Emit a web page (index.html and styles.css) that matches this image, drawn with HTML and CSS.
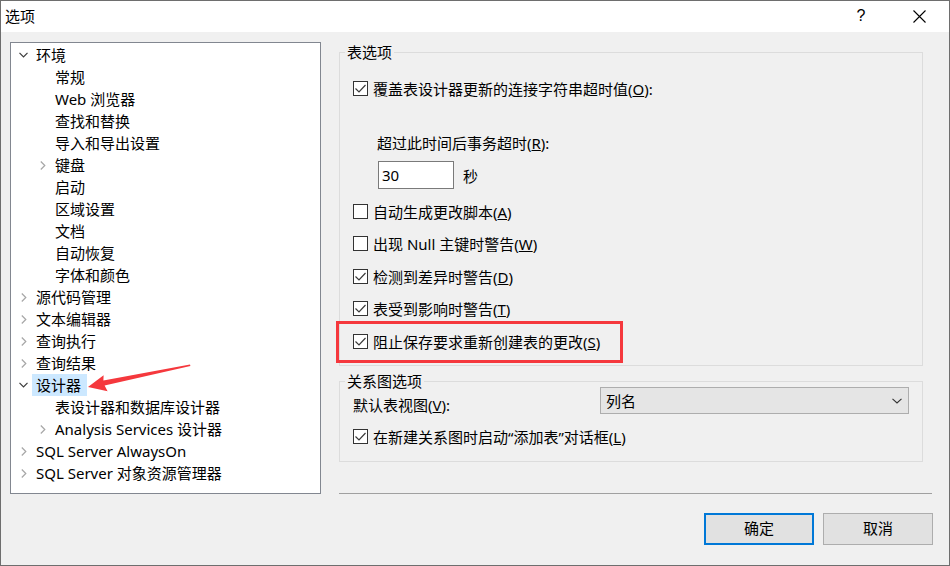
FILE: index.html
```html
<!DOCTYPE html>
<html lang="zh-CN">
<head>
<meta charset="utf-8">
<title>选项</title>
<link rel="stylesheet" href="styles.css">
</head>
<body>
<div class="window">
  <div class="titlebar">
    <span class="title">选项</span>
    <span class="tb-btn help">?</span>
    <span class="tb-btn close"><svg width="13" height="13" viewBox="0 0 13 13"><path d="M0.5 0.5 L12.5 12.5 M12.5 0.5 L0.5 12.5" stroke="#000" stroke-width="1.1" fill="none"/></svg></span>
  </div>
  <div class="content">
    <div class="tree">
      <div class="row l1"><span class="exp"><svg width="9" height="6" viewBox="0 0 9 6"><polyline points="0.5,0.8 4.5,4.8 8.5,0.8" class="chev-open"/></svg></span><span class="lbl">环境</span></div>
      <div class="row l2"><span class="exp"></span><span class="lbl">常规</span></div>
      <div class="row l2"><span class="exp"></span><span class="lbl">Web 浏览器</span></div>
      <div class="row l2"><span class="exp"></span><span class="lbl">查找和替换</span></div>
      <div class="row l2"><span class="exp"></span><span class="lbl">导入和导出设置</span></div>
      <div class="row l2"><span class="exp"><svg width="6" height="9" viewBox="0 0 6 9"><polyline points="0.8,0.5 4.8,4.5 0.8,8.5" class="chev"/></svg></span><span class="lbl">键盘</span></div>
      <div class="row l2"><span class="exp"></span><span class="lbl">启动</span></div>
      <div class="row l2"><span class="exp"></span><span class="lbl">区域设置</span></div>
      <div class="row l2"><span class="exp"></span><span class="lbl">文档</span></div>
      <div class="row l2"><span class="exp"></span><span class="lbl">自动恢复</span></div>
      <div class="row l2"><span class="exp"></span><span class="lbl">字体和颜色</span></div>
      <div class="row l1"><span class="exp"><svg width="6" height="9" viewBox="0 0 6 9"><polyline points="0.8,0.5 4.8,4.5 0.8,8.5" class="chev"/></svg></span><span class="lbl">源代码管理</span></div>
      <div class="row l1"><span class="exp"><svg width="6" height="9" viewBox="0 0 6 9"><polyline points="0.8,0.5 4.8,4.5 0.8,8.5" class="chev"/></svg></span><span class="lbl">文本编辑器</span></div>
      <div class="row l1"><span class="exp"><svg width="6" height="9" viewBox="0 0 6 9"><polyline points="0.8,0.5 4.8,4.5 0.8,8.5" class="chev"/></svg></span><span class="lbl">查询执行</span></div>
      <div class="row l1"><span class="exp"><svg width="6" height="9" viewBox="0 0 6 9"><polyline points="0.8,0.5 4.8,4.5 0.8,8.5" class="chev"/></svg></span><span class="lbl">查询结果</span></div>
      <div class="row l1"><span class="exp"><svg width="9" height="6" viewBox="0 0 9 6"><polyline points="0.5,0.8 4.5,4.8 8.5,0.8" class="chev-open"/></svg></span><span class="lbl selected">设计器</span></div>
      <div class="row l2"><span class="exp"></span><span class="lbl">表设计器和数据库设计器</span></div>
      <div class="row l2"><span class="exp"><svg width="6" height="9" viewBox="0 0 6 9"><polyline points="0.8,0.5 4.8,4.5 0.8,8.5" class="chev"/></svg></span><span class="lbl">Analysis Services 设计器</span></div>
      <div class="row l1"><span class="exp"><svg width="6" height="9" viewBox="0 0 6 9"><polyline points="0.8,0.5 4.8,4.5 0.8,8.5" class="chev"/></svg></span><span class="lbl">SQL Server AlwaysOn</span></div>
      <div class="row l1"><span class="exp"><svg width="6" height="9" viewBox="0 0 6 9"><polyline points="0.8,0.5 4.8,4.5 0.8,8.5" class="chev"/></svg></span><span class="lbl">SQL Server 对象资源管理器</span></div>
    </div>

    <div class="right">
      <fieldset class="group g1">
        <legend>表选项</legend>
        <div class="chk first">
          <svg class="cb" width="15" height="15" viewBox="0 0 15 15"><rect x="0.5" y="0.5" width="14" height="14" class="cb-box"/><polyline points="2.5,7.5 6,11 12.5,4" class="cb-mark"/></svg>
          <span>覆盖表设计器更新的连接字符串超时值(<u>O</u>):</span>
        </div>
        <div class="sublabel">超过此时间后事务超时(<u>R</u>):</div>
        <div class="timeout"><span class="textbox">30</span><span class="unit">秒</span></div>
        <div class="checks">
          <div class="chk tall">
            <svg class="cb" width="15" height="15" viewBox="0 0 15 15"><rect x="0.5" y="0.5" width="14" height="14" class="cb-box"/></svg>
            <span>自动生成更改脚本(<u>A</u>)</span>
          </div>
          <div class="chk tall">
            <svg class="cb" width="15" height="15" viewBox="0 0 15 15"><rect x="0.5" y="0.5" width="14" height="14" class="cb-box"/></svg>
            <span>出现 Null 主键时警告(<u>W</u>)</span>
          </div>
          <div class="chk tall">
            <svg class="cb" width="15" height="15" viewBox="0 0 15 15"><rect x="0.5" y="0.5" width="14" height="14" class="cb-box"/><polyline points="2.5,7.5 6,11 12.5,4" class="cb-mark"/></svg>
            <span>检测到差异时警告(<u>D</u>)</span>
          </div>
          <div class="chk tall">
            <svg class="cb" width="15" height="15" viewBox="0 0 15 15"><rect x="0.5" y="0.5" width="14" height="14" class="cb-box"/><polyline points="2.5,7.5 6,11 12.5,4" class="cb-mark"/></svg>
            <span>表受到影响时警告(<u>T</u>)</span>
          </div>
          <div class="chk tall">
            <svg class="cb" width="15" height="15" viewBox="0 0 15 15"><rect x="0.5" y="0.5" width="14" height="14" class="cb-box"/><polyline points="2.5,7.5 6,11 12.5,4" class="cb-mark"/></svg>
            <span>阻止保存要求重新创建表的更改(<u>S</u>)</span>
          </div>
        </div>
      </fieldset>

      <fieldset class="group g2">
        <legend>关系图选项</legend>
        <div class="viewrow">
          <span class="vlabel">默认表视图(<u>V</u>):</span>
          <div class="select"><span>列名</span><svg width="10" height="6" viewBox="0 0 10 6"><polyline points="0.5,0.8 5,5 9.5,0.8" class="sel-chev"/></svg></div>
        </div>
        <div class="chk g2chk">
          <svg class="cb" width="15" height="15" viewBox="0 0 15 15"><rect x="0.5" y="0.5" width="14" height="14" class="cb-box"/><polyline points="2.5,7.5 6,11 12.5,4" class="cb-mark"/></svg>
          <span>在新建关系图时启动“添加表”对话框(<u>L</u>)</span>
        </div>
      </fieldset>

      <div class="sep"></div>
      <div class="buttons">
        <button class="btn default">确定</button>
        <button class="btn">取消</button>
      </div>
    </div>
  </div>

  <svg class="annot" width="950" height="566" viewBox="0 0 950 566">
    <rect x="337.5" y="322.5" width="284" height="39" class="annot-box"/>
    <polygon points="88,387 103.6,375.2 103.4,380.4 190,364.4 190.4,366 104.6,385.6 107.6,391.2" class="annot-arrow"/>
  </svg>
</div>
</body>
</html>
```

FILE: styles.css
```css
* {
  box-sizing: border-box;
}

html, body {
  margin: 0;
  padding: 0;
  background: #f0f0f0;
}

body {
  font-family: "Noto Sans", "Noto Sans CJK SC", sans-serif;
  font-size: 15px;
  color: #000;
}

.window {
  position: relative;
  width: 950px;
  height: 566px;
  border: 1px solid #6e6e6e;
  background: #f0f0f0;
  overflow: hidden;
}

/* Title bar */
.titlebar {
  height: 31px;
  background: #fff;
  display: flex;
  align-items: center;
}

.title {
  padding-left: 4px;
  line-height: 31px;
}

.tb-btn {
  width: 40px;
  height: 31px;
  display: flex;
  align-items: center;
  justify-content: center;
}

.help {
  margin-left: auto;
  font-family: "Liberation Sans", sans-serif;
  font-size: 16px;
  padding-bottom: 1px;
}

.close {
  margin-left: 18px;
  margin-right: 10px;
  padding-bottom: 1px;
}

.close svg {
  display: block;
}

/* Content */
.content {
  display: flex;
  padding: 10px 0 0 9px;
  gap: 18px;
}

/* Tree */
.tree {
  width: 311px;
  height: 452px;
  border: 1px solid #828790;
  background: #fff;
  padding-top: 1px;
}

.row {
  display: flex;
  align-items: center;
  height: 22px;
  white-space: nowrap;
}

.row.l1 {
  padding-left: 6px;
}

.row.l2 {
  padding-left: 25px;
}

.exp {
  width: 13px;
  height: 22px;
  display: flex;
  align-items: center;
  justify-content: center;
}

.exp svg {
  display: block;
}

.chev {
  fill: none;
  stroke: #a6a6a6;
  stroke-width: 1.2;
}

.chev-open {
  fill: none;
  stroke: #3c3c3c;
  stroke-width: 1.2;
}

.lbl {
  margin-left: 2px;
  padding: 0 6px 0 4px;
  line-height: 22px;
  height: 22px;
}

.lbl.selected {
  background: #cce8ff;
}

/* Right side */
.right {
  width: 594px;
  padding-top: 4px;
  display: flex;
  flex-direction: column;
}

.group {
  margin: 0;
  padding: 0 0 0 13px;
  width: 584px;
  min-width: 0;
  border: 1px solid #dcdcdc;
}

.group legend {
  margin-left: -8px;
  padding: 0 2px;
  line-height: 12px;
  height: 12px;
}

.chk {
  display: flex;
  align-items: center;
  gap: 5px;
  height: 22px;
  white-space: nowrap;
}

.chk.first {
  margin-top: 19px;
}

.chk.tall {
  height: 32.5px;
}

.cb {
  display: block;
  flex: none;
}

.cb-box {
  fill: #fff;
  stroke: #333;
  stroke-width: 1;
}

.cb-mark {
  fill: none;
  stroke: #3a3a3a;
  stroke-width: 1.2;
}

.sublabel {
  margin-top: 33px;
  margin-left: 24px;
  line-height: 22px;
  height: 22px;
}

.timeout {
  margin-top: 7px;
  margin-left: 25px;
  display: flex;
  align-items: center;
  height: 28px;
}

.textbox {
  width: 76px;
  height: 28px;
  border: 1px solid #7a7a7a;
  background: #fff;
  padding-left: 3px;
  line-height: 26px;
}

.unit {
  margin-left: 9px;
}

.checks {
  margin-top: 5.75px;
  padding-bottom: 7.75px;
}

.g2 {
  margin-top: 9px;
  padding-bottom: 13px;
}

.viewrow {
  display: flex;
  height: 27px;
}

.vlabel {
  margin-top: 7px;
  line-height: 22px;
  height: 22px;
}

.select {
  margin-left: auto;
  margin-right: 13px;
  width: 309px;
  height: 27px;
  background: #e5e5e5;
  border: 1px solid #adadad;
  display: flex;
  align-items: center;
  padding-left: 5px;
  padding-right: 6px;
}

.select span {
  flex: 1;
  line-height: 22px;
}

.select svg {
  display: block;
}

.sel-chev {
  fill: none;
  stroke: #333;
  stroke-width: 1.1;
}

.g2chk {
  margin-top: 11px;
  margin-bottom: 1px;
}

.sep {
  margin-top: 31px;
  width: 593px;
  height: 1px;
  background: #a0a0a0;
}

.buttons {
  margin-top: 19px;
  display: flex;
  justify-content: flex-end;
  gap: 9px;
}

.btn {
  width: 110px;
  height: 32px;
  background: #e1e1e1;
  border: 1px solid #adadad;
  font-family: "Noto Sans", "Noto Sans CJK SC", sans-serif;
  font-size: 15px;
  line-height: 20px;
  color: #000;
  padding: 0 0 2px 0;
  margin: 0;
}

.btn.default {
  border: 2px solid #0078d7;
}

/* Annotation overlay */
.annot {
  position: absolute;
  left: -1px;
  top: -1px;
  pointer-events: none;
}

.annot-box {
  fill: none;
  stroke: #f5383d;
  stroke-width: 3;
}

.annot-arrow {
  fill: #f5383d;
}
```
